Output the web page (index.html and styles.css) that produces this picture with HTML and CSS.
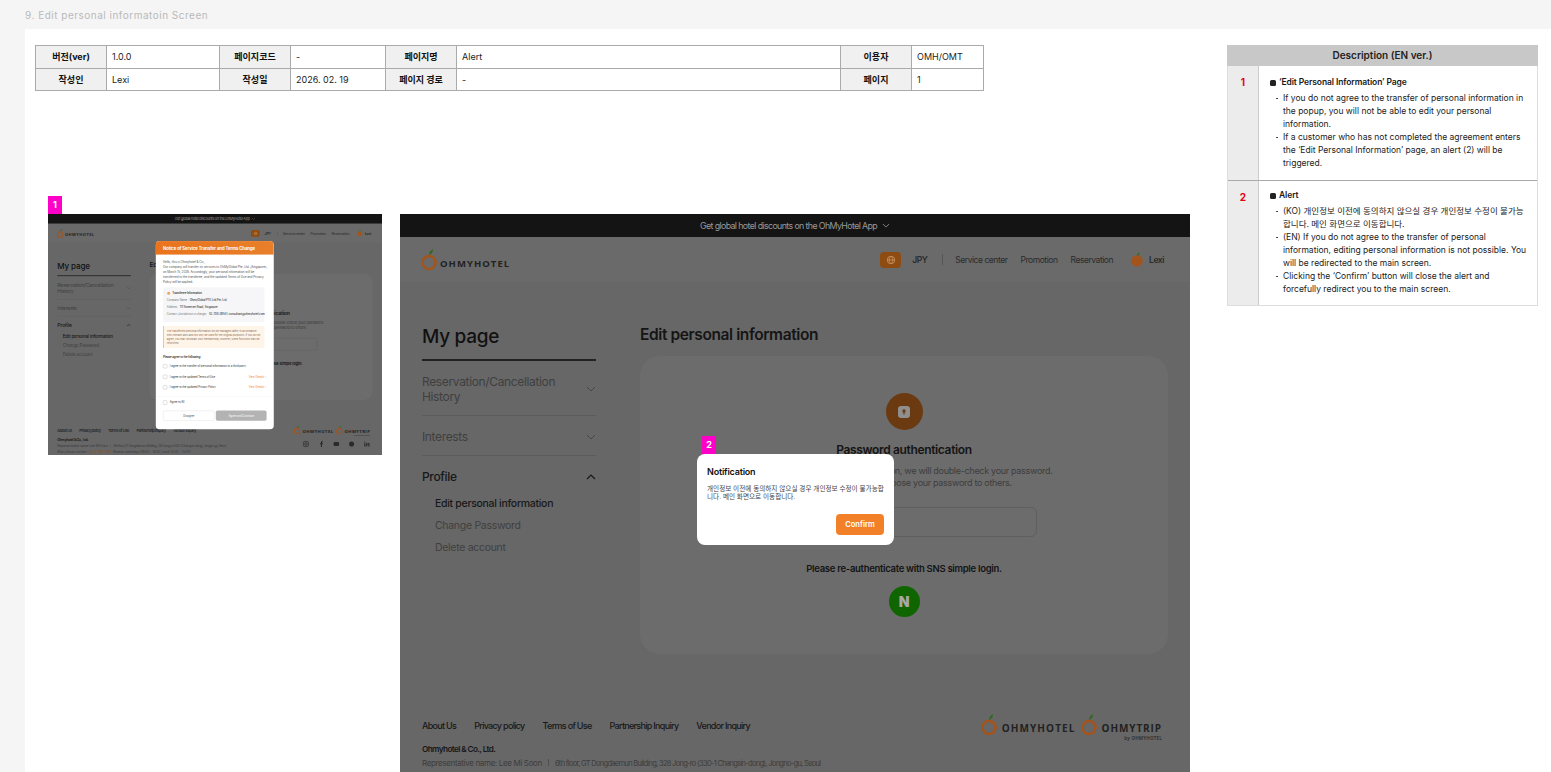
FILE: index.html
```html
<!DOCTYPE html>
<html lang="en">
<head>
<meta charset="utf-8">
<title>Edit personal information Screen</title>
<link rel="stylesheet" href="styles.css">
</head>
<body>
<header class="section-head">9. Edit personal informatoin Screen</header>
<main class="canvas">
  <div class="left-col">
    <table class="meta">
      <colgroup><col class="c1"><col class="c2"><col class="c3"><col class="c4"><col class="c5"><col class="c6"><col class="c7"><col class="c8"></colgroup>
      <tr><th>버전(ver)</th><td>1.0.0</td><th>페이지코드</th><td>-</td><th>페이지명</th><td>Alert</td><th>이용자</th><td>OMH/OMT</td></tr>
      <tr><th>작성인</th><td>Lexi</td><th>작성일</th><td>2026. 02. 19</td><th>페이지 경로</th><td>-</td><th>페이지</th><td>1</td></tr>
    </table>
    <div class="frames">
      <section class="frame-small">
        <div class="marker">1</div>
        <div class="thumb">
          <div class="shot shot-scaled">
            <div class="promo">Get global hotel discounts on the OhMyHotel App <svg class="chev-s" viewBox="0 0 10 6"><path d="M1 1l4 4 4-4"/></svg></div>
            <div class="site-head">
              <div class="logo"><svg class="ring" viewBox="0 0 16 22"><path class="leaf" d="M8 6C8 3 10 1 12 0c0 3-1 5-4 6z"/><circle class="ring-c" cx="8" cy="13.5" r="6.5"/></svg><span class="logo-t">OHMYHOTEL</span></div>
              <nav class="site-nav"><span class="lang"><svg viewBox="0 0 12 12"><circle cx="6" cy="6" r="4.5"/><path d="M1.5 6h9M6 1.5c-3 3-3 6 0 9M6 1.5c3 3 3 6 0 9"/></svg></span><b class="jpy">JPY</b><i class="nav-sep"></i><a>Service center</a><a>Promotion</a><a>Reservation</a><span class="user"><svg class="ring" viewBox="0 0 16 18"><circle cx="8" cy="10" r="6.5" class="avatar"/><path class="leaf" d="M8 4c0-2 1-3 3-4 0 2-1 4-3 4z"/></svg><b>Lexi</b></span></nav>
            </div>
            <div class="site-main">
              <aside class="side">
                <h2 class="side-title">My page</h2>
                <div class="side-item"><span>Reservation/Cancellation History</span><svg class="chev" viewBox="0 0 10 6"><path d="M1 1l4 4 4-4"/></svg></div>
                <div class="side-item"><span>Interests</span><svg class="chev" viewBox="0 0 10 6"><path d="M1 1l4 4 4-4"/></svg></div>
                <div class="side-item open"><span>Profile</span><svg class="chev up" viewBox="0 0 10 6"><path d="M1 5l4-4 4 4"/></svg></div>
                <a class="sub cur">Edit personal information</a><a class="sub">Change Password</a><a class="sub">Delete account</a>
              </aside>
              <div class="content">
                <h1 class="page-title">Edit personal information</h1>
                <div class="auth-card">
                  <div class="lock"><svg viewBox="0 0 14 14"><rect x="1" y="1" width="12" height="12" rx="3"/><circle class="hole" cx="7" cy="6" r="1.7"/><path class="hole" d="M6.4 6h1.2v3.4H6.4z"/></svg></div>
                  <h3 class="auth-title">Password authentication</h3>
                  <p class="auth-text">To protect your personal information, we will double-check your password.<br>Please be sure not to expose your password to others.</p>
                  <div class="auth-input"></div>
                  <p class="auth-sns">Please re-authenticate with SNS simple login.</p>
                  <div class="naver">N</div>
                </div>
              </div>
            </div>
            <footer class="site-foot">
              <div class="foot-left">
                <nav class="foot-links"><a>About Us</a><a>Privacy policy</a><a>Terms of Use</a><a>Partnership Inquiry</a><a>Vendor Inquiry</a></nav>
                <b class="co">Ohmyhotel &amp; Co., Ltd.</b>
                <p class="addr">Representative name: Lee Mi Soon<i></i><span>6th floor, GT Dongdaemun Building, 328 Jong-ro (330-1 Changsin-dong), Jongno-gu, Seoul</span></p>
                <p class="addr">Main phone number : <em>82-2-793-0102</em> (Korean weekdays 09:00 - 18:00, lunch 12:00 - 13:00)</p>
              </div>
              <div class="foot-right">
                <div class="foot-logos">
                  <div class="logo"><svg class="ring" viewBox="0 0 16 22"><path class="leaf" d="M8 6C8 3 10 1 12 0c0 3-1 5-4 6z"/><circle class="ring-c" cx="8" cy="13.5" r="6.5"/></svg><span class="logo-t">OHMYHOTEL</span></div>
                  <div class="logo"><svg class="ring" viewBox="0 0 16 22"><path class="leaf" d="M8 6C8 3 10 1 12 0c0 3-1 5-4 6z"/><circle class="ring-c" cx="8" cy="13.5" r="6.5"/></svg><span class="logo-t trip">OHMYTRIP<small>by OHMYHOTEL</small></span></div>
                </div>
                <div class="social"><svg viewBox="0 0 16 16"><rect x="2" y="2" width="12" height="12" rx="3.5"/><circle cx="8" cy="8" r="3"/></svg><svg viewBox="0 0 16 16"><path d="M10 15V8.500h2.200l.3-2.500H10V4.600c0-.8.3-1.200 1.200-1.200h1.400V1.200H10.700c-2.200 0-3.300 1.200-3.300 3.100V6H5.500v2.500h1.900V15z" class="solid"/></svg><svg viewBox="0 0 16 16"><rect x="1.500" y="3" width="13" height="10" rx="2.500" class="solid"/></svg><svg viewBox="0 0 16 16"><circle cx="8" cy="8" r="6" class="solid"/></svg><svg viewBox="0 0 16 16"><path class="solid" d="M2 6h2.700v8H2zM3.300 2a1.500 1.500 0 110 3 1.500 1.500 0 010-3zM6.500 6h2.600v1.200C9.700 6.300 10.600 5.800 11.800 5.800c2 0 2.700 1.300 2.700 3.400V14h-2.700V9.700c0-1-.3-1.600-1.200-1.600s-1.400.7-1.400 1.700V14H6.500z"/></svg></div>
              </div>
            </footer>
            <div class="consent">
              <div class="consent-head">Notice of Service Transfer and Terms Change</div>
              <div class="consent-body">
                <p class="c-text">Hello, this is Ohmyhotel &amp; Co.,</p>
                <p class="c-text">Our company will transfer its services to OhMyGlobal Pte. Ltd. (Singapore) on March 15, 2026. Accordingly, your personal information will be transferred to the transferee, and the updated Terms of Use and Privacy Policy will be applied.</p>
                <div class="c-box">
                  <div class="c-box-title"><svg viewBox="0 0 10 10"><circle cx="5" cy="5" r="4"/></svg>Transferee Information</div>
                  <div class="c-row"><span>Company Name</span><b>OhmyGlobal PTE.Ltd.Pte. Ltd.</b></div>
                  <div class="c-row"><span>Address</span><b>111 Somerset Road, Singapore</b></div>
                  <div class="c-row"><span>Contact (Jurisdiction in charge)</span><b>82-704-0954 | consultant@ohmyhotel.com</b></div>
                </div>
                <div class="c-note">The transferred personal information will be managed safely in accordance with relevant laws and will only be used for the original purposes. If you do not agree, you may withdraw your membership; however, some functions may be restricted.</div>
                <p class="c-agree">Please agree to the following:</p>
                <label class="c-check"><i></i><span>I agree to the transfer of personal information to a third party.</span></label>
                <label class="c-check"><i></i><span>I agree to the updated Terms of Use.</span><em>View Details &gt;</em></label>
                <label class="c-check"><i></i><span>I agree to the updated Privacy Policy.</span><em>View Details &gt;</em></label>
                <hr class="c-rule">
                <label class="c-check c-all"><i></i><span>Agree to All</span></label>
                <div class="c-btns"><span class="c-btn-a">Disagree</span><span class="c-btn-b">Agree and Continue</span></div>
              </div>
            </div>
          </div>
        </div>
      </section>

      <section class="frame-large">
        <div class="shot">
          <div class="promo">Get global hotel discounts on the OhMyHotel App <svg class="chev-s" viewBox="0 0 10 6"><path d="M1 1l4 4 4-4"/></svg></div>
          <div class="site-head">
            <div class="logo"><svg class="ring" viewBox="0 0 16 22"><path class="leaf" d="M8 6C8 3 10 1 12 0c0 3-1 5-4 6z"/><circle class="ring-c" cx="8" cy="13.5" r="6.5"/></svg><span class="logo-t">OHMYHOTEL</span></div>
            <nav class="site-nav"><span class="lang"><svg viewBox="0 0 12 12"><circle cx="6" cy="6" r="4.5"/><path d="M1.5 6h9M6 1.5c-3 3-3 6 0 9M6 1.5c3 3 3 6 0 9"/></svg></span><b class="jpy">JPY</b><i class="nav-sep"></i><a>Service center</a><a>Promotion</a><a>Reservation</a><span class="user"><svg class="ring" viewBox="0 0 16 18"><circle cx="8" cy="10" r="6.5" class="avatar"/><path class="leaf" d="M8 4c0-2 1-3 3-4 0 2-1 4-3 4z"/></svg><b>Lexi</b></span></nav>
          </div>
          <div class="site-main">
            <aside class="side">
              <h2 class="side-title">My page</h2>
              <div class="side-item"><span>Reservation/Cancellation History</span><svg class="chev" viewBox="0 0 10 6"><path d="M1 1l4 4 4-4"/></svg></div>
              <div class="side-item"><span>Interests</span><svg class="chev" viewBox="0 0 10 6"><path d="M1 1l4 4 4-4"/></svg></div>
              <div class="side-item open"><span>Profile</span><svg class="chev up" viewBox="0 0 10 6"><path d="M1 5l4-4 4 4"/></svg></div>
              <a class="sub cur">Edit personal information</a><a class="sub">Change Password</a><a class="sub">Delete account</a>
            </aside>
            <div class="content">
              <h1 class="page-title">Edit personal information</h1>
              <div class="auth-card">
                <div class="lock"><svg viewBox="0 0 14 14"><rect x="1" y="1" width="12" height="12" rx="3"/><circle class="hole" cx="7" cy="6" r="1.7"/><path class="hole" d="M6.400 6h1.200v3.400H6.400z"/></svg></div>
                <h3 class="auth-title">Password authentication</h3>
                <p class="auth-text">To protect your personal information, we will double-check your password.<br>Please be sure not to expose your password to others.</p>
                <div class="auth-input"></div>
                <p class="auth-sns">Please re-authenticate with SNS simple login.</p>
                <div class="naver">N</div>
              </div>
            </div>
          </div>
          <footer class="site-foot">
            <div class="foot-left">
              <nav class="foot-links"><a>About Us</a><a>Privacy policy</a><a>Terms of Use</a><a>Partnership Inquiry</a><a>Vendor Inquiry</a></nav>
              <b class="co">Ohmyhotel &amp; Co., Ltd.</b>
              <p class="addr">Representative name: Lee Mi Soon<i></i><span>6th floor, GT Dongdaemun Building, 328 Jong-ro (330-1 Changsin-dong), Jongno-gu, Seoul</span></p>
            </div>
            <div class="foot-right">
              <div class="foot-logos">
                <div class="logo"><svg class="ring" viewBox="0 0 16 22"><path class="leaf" d="M8 6C8 3 10 1 12 0c0 3-1 5-4 6z"/><circle class="ring-c" cx="8" cy="13.5" r="6.5"/></svg><span class="logo-t">OHMYHOTEL</span></div>
                <div class="logo"><svg class="ring" viewBox="0 0 16 22"><path class="leaf" d="M8 6C8 3 10 1 12 0c0 3-1 5-4 6z"/><circle class="ring-c" cx="8" cy="13.5" r="6.5"/></svg><span class="logo-t trip">OHMYTRIP<small>by OHMYHOTEL</small></span></div>
              </div>
            </div>
          </footer>
          <div class="alert-wrap">
            <div class="marker">2</div>
            <div class="alert">
              <h4 class="alert-title">Notification</h4>
              <p class="alert-text">개인정보 이전에 동의하지 않으실 경우 개인정보 수정이 불가능합니다. 메인 화면으로 이동합니다.</p>
              <div class="alert-actions"><button class="alert-btn">Confirm</button></div>
            </div>
          </div>
        </div>
      </section>
    </div>
  </div>

  <aside class="desc">
    <div class="desc-head">Description (EN ver.)</div>
    <div class="desc-row">
      <div class="desc-num">1</div>
      <div class="desc-body">
        <div class="desc-title"><i></i>‘Edit Personal Information’ Page</div>
        <ul>
          <li>If you do not agree to the transfer of personal information in the popup, you will not be able to edit your personal information.</li>
          <li>If a customer who has not completed the agreement enters the ‘Edit Personal Information’ page, an alert (2) will be triggered.</li>
        </ul>
      </div>
    </div>
    <div class="desc-row">
      <div class="desc-num">2</div>
      <div class="desc-body">
        <div class="desc-title"><i></i>Alert</div>
        <ul>
          <li>(KO) 개인정보 이전에 동의하지 않으실 경우 개인정보 수정이 불가능합니다. 메인 화면으로 이동합니다.</li>
          <li>(EN) If you do not agree to the transfer of personal information, editing personal information is not possible. You will be redirected to the main screen.</li>
          <li>Clicking the ‘Confirm’ button will close the alert and forcefully redirect you to the main screen.</li>
        </ul>
      </div>
    </div>
  </aside>
</main>
</body>
</html>
```

FILE: styles.css
```css
* { box-sizing: border-box; }
html, body { margin: 0; height: 772px; overflow: hidden; }
body { background: #f5f5f5; font-family: Inter, "Noto Sans CJK KR", sans-serif; color: #222; width: 1551px; }
p, h1, h2, h3, h4, ul { margin: 0; padding: 0; }

.section-head { height: 29px; padding-left: 25px; line-height: 30px; font-size: 10px; letter-spacing: .5px; color: #b9b9b9; }
.canvas { margin-left: 25px; height: 743px; background: #fff; display: flex; overflow: hidden; }
.left-col { width: 1202px; flex: none; padding: 16px 0 0 10px; }

.meta { border-collapse: collapse; table-layout: fixed; width: 949px; font-size: 9px; }
.meta th, .meta td { height: 22.5px; border: 1px solid #aaa; padding: 0 5px; color: #222; }
.meta th { background: #f0f0f0; font-weight: 700; text-align: center; color: #111; }
.meta td { font-weight: 400; }
.c1, .c3, .c5, .c7 { width: 71px; }
.c2 { width: 113px; } .c4 { width: 95px; } .c6 { width: 384px; } .c8 { width: 72px; }

.frames { display: flex; gap: 18px; margin: 105px 0 0 13px; align-items: flex-start; }
.marker { width: 14px; height: 18px; background: #ff00c8; color: #fff; font-size: 9px; font-weight: 700; line-height: 18px; text-align: center; }
.frame-small { width: 334px; flex: none; }
.thumb { width: 334px; height: 241px; overflow: hidden; }
.frame-large { width: 790px; flex: none; margin-top: 18px; }

.shot { position: relative; width: 790px; height: 570px; background: #676767; overflow: hidden; letter-spacing: -.2px; }
.shot-scaled { transform: scale(.4228); transform-origin: 0 0; }

.promo { height: 23px; background: #141414; color: #9a9a9a; font-size: 8.8px; line-height: 23px; text-align: center; letter-spacing: -.6px; }
.chev-s { width: 8px; height: 5px; margin-left: 3px; vertical-align: 1px; fill: none; stroke: #9a9a9a; stroke-width: 1; }
.site-head { height: 45px; background: #6a6a6a; display: flex; align-items: center; justify-content: space-between; padding: 0 26px 0 21px; }
.logo { display: flex; align-items: flex-end; gap: 3px; }
.ring { width: 16px; height: 22px; display: block; }
.leaf { fill: #2f6b1e; }
.ring-c { fill: none; stroke: #a3541c; stroke-width: 2.6; }
.logo-t { font-family: "Open Sans", sans-serif; font-size: 9.5px; font-weight: 700; letter-spacing: 1.05px; line-height: 13px; color: #222; margin-bottom: 1px; }
.site-nav { display: flex; align-items: center; color: #2a2a2a; font-size: 8.5px; letter-spacing: -.45px; }
.site-nav a { margin-right: 13px; }
.lang { width: 21px; height: 16px; border-radius: 4px; background: #8e4c12; display: flex; align-items: center; justify-content: center; margin-right: 11px; }
.lang svg { width: 10px; height: 10px; fill: none; stroke: #c99160; stroke-width: 1; }
.jpy { font-weight: 600; width: 30px; }
.nav-sep { width: 1px; height: 11px; background: #555; margin-right: 12px; }
.user { display: flex; align-items: center; gap: 5px; margin-left: 4px; }
.user .ring { width: 14px; height: 16px; }
.user b { font-weight: 600; }
.avatar { fill: #a3541c; }

.site-main { height: 430px; display: grid; grid-template-columns: 174px 528px; column-gap: 44px; padding: 43px 0 0 22px; }
.side-title { font-size: 19px; line-height: 24px; font-weight: 500; color: #111; padding-bottom: 10px; border-bottom: 2px solid #222; letter-spacing: -.3px; }
.side-item { display: flex; align-items: center; justify-content: space-between; padding: 13px 0 11px; border-bottom: 1px solid #5c5c5c; font-size: 12px; line-height: 15px; color: #3f3f3f; letter-spacing: -.35px; }
.side-item span { max-width: 150px; }
.side-item.open { border-bottom: 0; color: #181818; font-weight: 500; padding-bottom: 0; }
.chev { width: 10px; height: 6px; fill: none; stroke: #474747; stroke-width: 1; }
.chev.up { stroke: #181818; stroke-width: 1.2; }
.sub { display: block; margin-left: 13px; font-size: 10.5px; line-height: 22px; color: #3f3f3f; letter-spacing: -.3px; }
.sub.cur { color: #181818; font-weight: 500; margin-top: 9px; }

.page-title { font-size: 15.5px; line-height: 20px; font-weight: 600; color: #151515; letter-spacing: -.4px; }
.auth-card { margin-top: 11px; height: 298px; border-radius: 20px; background: #6c6c6c; padding-top: 37px; display: flex; flex-direction: column; align-items: center; text-align: center; }
.lock { width: 37px; height: 37px; border-radius: 50%; background: #6b3a10; display: flex; align-items: center; justify-content: center; }
.lock svg { width: 14px; height: 14px; fill: #8f8f8f; }
.lock .hole { fill: #6b3a10; }
.auth-title { margin-top: 12px; font-size: 12px; line-height: 16px; font-weight: 600; color: #141414; letter-spacing: -.35px; }
.auth-text { margin-top: 7px; font-size: 9px; line-height: 12px; color: #3d3d3d; letter-spacing: -.3px; }
.auth-input { margin-top: 18px; width: 266px; height: 30px; border: 1px solid #5f5f5f; border-radius: 6px; }
.auth-sns { margin-top: 25px; font-size: 9.5px; line-height: 14px; font-weight: 600; color: #141414; letter-spacing: -.3px; }
.naver { margin-top: 10px; width: 31px; height: 31px; border-radius: 50%; background: #0f6600; color: #a8a8a8; font-size: 14px; line-height: 31px; font-weight: 900; }

.site-foot { display: flex; justify-content: space-between; padding: 7px 28px 0 22px; }
.foot-links { display: flex; gap: 18px; font-size: 9px; line-height: 14px; font-weight: 500; color: #181818; letter-spacing: -.7px; }
.co { display: block; margin-top: 9px; font-size: 8.2px; line-height: 14px; font-weight: 600; color: #181818; letter-spacing: -.6px; }
.addr { font-size: 8px; line-height: 12px; color: #3c3c3c; margin-top: 1px; letter-spacing: -.35px; white-space: nowrap; }
.addr span { font-size: 7.5px; letter-spacing: -.7px; }
.addr i { display: inline-block; width: 1px; height: 7px; background: #4f4f4f; margin: 0 6px; }
.addr em { font-style: normal; color: #8e4c12; }
.foot-right { display: flex; flex-direction: column; align-items: flex-end; }
.foot-logos { display: flex; gap: 5px; margin-top: -5px; }
.foot-logos .logo { gap: 5px; }
.foot-logos .logo-t { font-size: 10px; letter-spacing: 1.1px; }
.logo-t.trip { position: relative; letter-spacing: .9px; }
.logo-t small { position: absolute; right: 0; top: 13px; font-size: 4.5px; letter-spacing: .2px; color: #333; white-space: nowrap; line-height: 6px; }
.social { display: flex; gap: 20px; margin-top: 14px; }
.social svg { width: 16px; height: 16px; fill: none; stroke: #2a2a2a; stroke-width: 1.5; }
.social .solid { fill: #2a2a2a; stroke: none; }

.consent { position: absolute; left: 255px; top: 64px; width: 279px; height: 445px; background: #fff; border-radius: 9px; overflow: hidden; letter-spacing: -.1px; }
.consent-head { height: 32px; background: linear-gradient(90deg, #e9741c, #e87f2b); color: #fff; font-size: 10px; line-height: 32px; font-weight: 700; padding-left: 17px; }
.consent-body { padding: 12px 17px 0; color: #555; font-size: 6.5px; line-height: 12px; }
.c-text { font-size: 7.2px; }
.c-box { margin-top: 5px; height: 83px; border-radius: 6px; background: #f6f6f8; padding: 8px 9px 0; width: 240px; }
.c-box-title { display: flex; align-items: center; gap: 4px; font-weight: 600; color: #333; height: 12px; }
.c-box-title svg { width: 9px; height: 9px; fill: #f6a35c; }
.c-row { display: flex; gap: 6px; margin-top: 6px; height: 11px; line-height: 11px; white-space: nowrap; color: #777; }
.c-row b { color: #333; font-weight: 500; }
.c-note { margin-top: 9px; height: 52px; padding: 7px 6px 0 7px; background: #fff4e8; border-left: 2px solid #f2b98a; color: #8a6d55; font-size: 6.2px; line-height: 9.5px; width: 240px; }
.c-agree { margin-top: 15px; color: #222; font-weight: 600; }
.c-check { display: flex; align-items: center; gap: 6px; height: 11px; margin-top: 14px; color: #333; }
.c-check i { width: 10px; height: 10px; border: 1px solid #bbb; border-radius: 2px; flex: none; }
.c-check span { white-space: nowrap; }
.c-check em { margin-left: auto; font-style: normal; color: #f08a3c; }
.c-agree + .c-check { margin-top: 10.5px; }
.c-rule { margin: 15px -17px 0; border: 0; border-top: 1px solid #eee; }
.c-check.c-all { margin-top: 9px; }
.c-btns { display: flex; gap: 3px; margin-top: 13px; }
.c-btn-a, .c-btn-b { height: 24px; border-radius: 4px; line-height: 24px; text-align: center; flex: 1; }
.c-btn-a { border: 1px solid #ddd; color: #555; line-height: 22px; }
.c-btn-b { background: #b3b3b3; color: #eee; font-weight: 600; }

.alert-wrap { position: absolute; left: 297px; top: 222px; width: 197px; }
.alert-wrap .marker { margin-left: 5px; }
.alert { height: 91px; background: #fff; border-radius: 8px; padding: 12px 10px 0; letter-spacing: 0; }
.alert-title { font-size: 9px; line-height: 12px; font-weight: 600; color: #111; letter-spacing: -.2px; }
.alert-text { margin-top: 7px; font-size: 6.6px; line-height: 8px; color: #444; }
.alert-actions { display: flex; justify-content: flex-end; margin-top: 13px; }
.alert-btn { width: 48px; height: 21px; border: 0; padding: 0; border-radius: 4px; background: #f28028; color: #fff; font: 600 7.5px/21px Inter, sans-serif; }

.desc { width: 311px; margin: 16px 0 0 0; flex: none; border: 1px solid #ddd; border-top: 0; align-self: flex-start; font-size: 8.5px; line-height: 13px; color: #222; }
.desc-head { height: 21px; background: #c8c8c8; font-size: 10px; line-height: 21px; font-weight: 600; text-align: center; color: #222; margin: 0 -1px; }
.desc-row { display: flex; }
.desc-row + .desc-row { border-top: 1px solid #aaa; }
.desc-num { width: 31px; flex: none; background: #ececec; border-right: 1px solid #ccc; color: #e60012; font-size: 10px; font-weight: 700; text-align: center; padding-top: 10px; }
.desc-body { padding: 10px 9px 10px 11px; flex: 1; }
.desc-row + .desc-row .desc-body { padding: 8px 9px 9px 11px; }
.desc-title { display: flex; align-items: center; gap: 3px; font-weight: 600; color: #1a1a1a; margin-bottom: 3px; letter-spacing: -.1px; }
.desc-title i { width: 6px; height: 6px; border-radius: 1.5px; background: #222; }
.desc ul { list-style: none; padding-left: 13px; }
.desc li { position: relative; }
.desc li::before { content: ""; position: absolute; left: -7px; top: 6px; width: 2px; height: 1px; background: #444; }
```
